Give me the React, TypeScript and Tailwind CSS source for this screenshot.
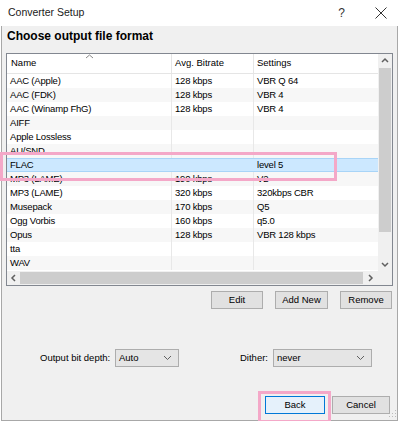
import React from "react";

type Row = { name: string; bitrate: string; settings: string };

const rows: Row[] = [
  { name: "AAC (Apple)", bitrate: "128 kbps", settings: "VBR Q 64" },
  { name: "AAC (FDK)", bitrate: "128 kbps", settings: "VBR 4" },
  { name: "AAC (Winamp FhG)", bitrate: "128 kbps", settings: "VBR 4" },
  { name: "AIFF", bitrate: "", settings: "" },
  { name: "Apple Lossless", bitrate: "", settings: "" },
  { name: "AU/SND", bitrate: "", settings: "" },
  { name: "FLAC", bitrate: "", settings: "level 5" },
  { name: "MP3 (LAME)", bitrate: "190 kbps", settings: "V2" },
  { name: "MP3 (LAME)", bitrate: "320 kbps", settings: "320kbps CBR" },
  { name: "Musepack", bitrate: "170 kbps", settings: "Q5" },
  { name: "Ogg Vorbis", bitrate: "160 kbps", settings: "q5.0" },
  { name: "Opus", bitrate: "128 kbps", settings: "VBR 128 kbps" },
  { name: "tta", bitrate: "", settings: "" },
  { name: "WAV", bitrate: "", settings: "" },
];

const SELECTED = 6;

// small scroll arrow chevron
function Chevron({ dir }: { dir: "up" | "down" | "left" | "right" }) {
  const pts = {
    up: "2,6 5,3 8,6",
    down: "2,4 5,7 8,4",
    left: "6,2 3,5 6,8",
    right: "4,2 7,5 4,8",
  }[dir];
  return (
    <svg width="10" height="10" viewBox="0 0 10 10">
      <polyline points={pts} fill="none" stroke="#606060" strokeWidth="1.5" />
    </svg>
  );
}

function DropArrow() {
  return (
    <svg width="9" height="6" viewBox="0 0 9 6">
      <polyline points="1,1 4.5,4.5 8,1" fill="none" stroke="#606060" strokeWidth="1" />
    </svg>
  );
}

function Button({ label, className = "" }: { label: string; className?: string }) {
  return (
    <div
      className={
        "shrink-0 h-[18px] flex items-center justify-center border text-[9.5px] text-black whitespace-nowrap " +
        className
      }
    >
      {label}
    </div>
  );
}

function Select({ value, className = "" }: { value: string; className?: string }) {
  return (
    <div
      className={
        "shrink-0 h-[18px] flex items-center justify-between border border-[#adadad] bg-[#e5e5e5] pl-[3px] pr-[6px] text-[9.5px] " +
        className
      }
    >
      <span>{value}</span>
      <DropArrow />
    </div>
  );
}

export default function App() {
  return (
    <div
      className="relative w-[400px] h-[421px] overflow-hidden bg-white text-black"
      style={{ fontFamily: '"Liberation Sans", Arial, sans-serif' }}
    >
      {/* title bar */}
      <div className="h-[26px] flex items-center pl-[8px] bg-white">
        <span className="text-[10.5px] text-[#1a1a1a]">Converter Setup</span>
        <div className="ml-auto flex items-center">
          <span className="text-[12px] text-[#333] mr-[30px]">?</span>
          <svg width="12" height="12" viewBox="0 0 12 12" className="mr-[13px]">
            <path d="M0.5 0.5 L11.5 11.5 M11.5 0.5 L0.5 11.5" stroke="#333" strokeWidth="1" />
          </svg>
        </div>
      </div>

      {/* body */}
      <div className="ml-[1px] mr-[2px] h-[395px] bg-[#f0f0f0] border-x border-b border-[#a8a8a8] pl-[4px] pr-[4px] flex flex-col">
        <div className="shrink-0 pt-[2px] pl-[1px] h-[27px] text-[12px] font-bold leading-[16px]">
          Choose output file format
        </div>

        {/* list view */}
        <div className="shrink-0 h-[233px] border border-[#828790] bg-white flex flex-col">
          <div className="flex flex-1 min-h-0">
            <div className="flex-1 flex flex-col text-[9.5px]">
              {/* header */}
              <div className="relative shrink-0 h-[20px] flex border-b border-[#e5e5e5]">
                <div className="w-[165px] pl-[4px] flex items-center border-r border-[#e5e5e5]">Name</div>
                <div className="w-[82px] pl-[3px] flex items-center border-r border-[#e5e5e5]">Avg. Bitrate</div>
                <div className="flex-1 pl-[3px] flex items-center">Settings</div>
                <svg width="9" height="5" viewBox="0 0 9 5" className="absolute left-[78px] top-[0px]">
                  <polyline points="1,4 4.5,1 8,4" fill="none" stroke="#888" strokeWidth="1" />
                </svg>
              </div>
              {rows.map((r, i) => {
                const sel = i === SELECTED;
                const bg = sel
                  ? "bg-[#cce8ff] border-y border-[#a8d4f7]"
                  : i % 2 === 1
                  ? "bg-[#f7f7f7]"
                  : "bg-white";
                const line = sel ? "" : "border-r border-[#e8e8e8]";
                return (
                  <div key={i} className={"shrink-0 h-[14px] flex items-center leading-[14px] tracking-[-0.2px] " + bg}>
                    <div className={"w-[165px] h-full pl-[3px] flex items-center whitespace-nowrap " + line}>
                      {r.name}
                    </div>
                    <div className={"w-[82px] h-full pl-[3px] flex items-center whitespace-nowrap " + line}>
                      {r.bitrate}
                    </div>
                    <div className="flex-1 h-full pl-[3px] flex items-center whitespace-nowrap">{r.settings}</div>
                  </div>
                );
              })}
            </div>
            {/* vertical scrollbar */}
            <div className="w-[14px] bg-[#f0f0f0] flex flex-col items-center">
              <div className="h-[14px] flex items-center justify-center">
                <Chevron dir="up" />
              </div>
              <div className="w-[12px] h-[164px] bg-[#cdcdcd]" />
              <div className="flex-1" />
              <div className="h-[14px] flex items-center justify-center">
                <Chevron dir="down" />
              </div>
            </div>
          </div>
          {/* horizontal scrollbar */}
          <div className="shrink-0 h-[14px] flex bg-[#f0f0f0]">
            <div className="w-[13px] flex items-center justify-center">
              <Chevron dir="left" />
            </div>
            <div className="w-[343px] h-[12px] my-[1px] bg-[#cdcdcd]" />
            <div className="w-[14px] flex items-center justify-center">
              <Chevron dir="right" />
            </div>
            <div className="flex-1 bg-[#f0f0f0]" />
          </div>
        </div>

        {/* edit buttons */}
        <div className="shrink-0 mt-[5px] flex justify-end pr-[1px] gap-[12px]">
          <Button label="Edit" className="w-[52px] border-[#adadad] bg-[#e1e1e1]" />
          <Button label="Add New" className="w-[53px] border-[#adadad] bg-[#e1e1e1]" />
          <Button label="Remove" className="w-[52px] border-[#adadad] bg-[#e1e1e1]" />
        </div>

        {/* bit depth / dither */}
        <div className="shrink-0 mt-[40px] flex items-center text-[9.5px] whitespace-nowrap">
          <span className="ml-[34px] w-[75px] shrink-0">Output bit depth:</span>
          <Select value="Auto" className="w-[64px]" />
          <span className="ml-[61px] w-[33px] shrink-0">Dither:</span>
          <Select value="never" className="w-[99px]" />
        </div>

        {/* nav buttons */}
        <div className="shrink-0 mt-[29px] flex justify-end pr-[3px] gap-[7px]">
          <Button label="Back" className="w-[60px] border-[#0078d7] bg-[#e5f1fb]" />
          <Button label="Cancel" className="w-[58px] border-[#adadad] bg-[#e1e1e1]" />
        </div>
      </div>

      {/* resize grip */}
      <svg width="8" height="8" viewBox="0 0 8 8" className="absolute right-[3px] bottom-[3px]">
        <rect x="6" y="0" width="1" height="1" fill="#bbb" />
        <rect x="3" y="3" width="1" height="1" fill="#bbb" />
        <rect x="6" y="3" width="1" height="1" fill="#bbb" />
        <rect x="0" y="6" width="1" height="1" fill="#bbb" />
        <rect x="3" y="6" width="1" height="1" fill="#bbb" />
        <rect x="6" y="6" width="1" height="1" fill="#bbb" />
      </svg>

      {/* pink highlight annotations */}
      <div className="absolute left-0 top-[152px] w-[337px] h-[29px] border-[3px] border-[#f4a8c8]" />
      <div className="absolute left-[258px] top-[391px] w-[73px] h-[32px] border-[3px] border-[#f4a8c8]" />
    </div>
  );
}
